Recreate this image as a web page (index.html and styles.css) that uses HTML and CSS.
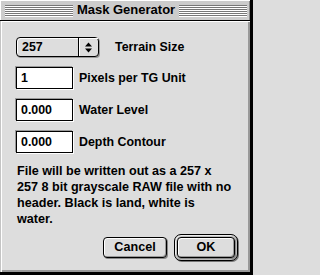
FILE: index.html
```html
<!DOCTYPE html>
<html>
<head>
<meta charset="utf-8">
<link rel="stylesheet" href="styles.css">
</head>
<body>
<div class="window">
  <div class="titlebar">
    <div class="stripes"></div>
    <div class="title">Mask Generator</div>
    <div class="stripes"></div>
  </div>
  <div class="content">
    <div class="row">
      <div class="popup">
        <div class="popup-value">257</div>
        <div class="popup-arrow">
          <svg width="7" height="11" viewBox="0 0 7 11"><polygon points="0,4.5 7,4.5 3.5,0.5" fill="#000"/><polygon points="0,6.5 7,6.5 3.5,10.5" fill="#000"/></svg>
        </div>
      </div>
      <div class="label label-popup">Terrain Size</div>
    </div>
    <div class="row">
      <div class="field">1</div>
      <div class="label">Pixels per TG Unit</div>
    </div>
    <div class="row">
      <div class="field">0.000</div>
      <div class="label">Water Level</div>
    </div>
    <div class="row">
      <div class="field">0.000</div>
      <div class="label">Depth Contour</div>
    </div>
    <p class="note">File will be written out as a 257 x<br>257 8 bit grayscale RAW file with no<br>header. Black is land, white is<br>water.</p>
    <div class="buttons">
      <div class="button">Cancel</div>
      <div class="ring"><div class="button button-default">OK</div></div>
    </div>
  </div>
</div>
</body>
</html>
```
FILE: styles.css
```css
html, body {
  margin: 0;
  padding: 0;
  background: #dddddd;
}
.window {
  width: 253px;
  height: 275px;
  box-sizing: border-box;
  border-right: 3px solid #000;
  border-bottom: 3px solid #000;
  display: flex;
  flex-direction: column;
  background: #dddddd;
  font-family: "Liberation Sans", Arial, sans-serif;
  font-weight: bold;
  color: #000;
}
.titlebar {
  height: 20px;
  flex: none;
  background: #cccccc;
  border-bottom: 1px solid #000;
  box-shadow: inset 1px 1px 0 #ffffff, inset -1px 0 0 #888888;
  display: flex;
  align-items: center;
  padding: 0 3px 0 5px;
}
.stripes {
  flex: 1;
  height: 12px;
  margin-top: 1px;
  background: repeating-linear-gradient(to bottom, #777777 0, #777777 1px, #ffffff 1px, #ffffff 2px);
}
.title {
  font-size: 13px;
  padding: 0 4px 0 4px;
  line-height: 20px;
}
.content {
  flex: 1;
  border-left: 1px solid #c4c4c4;
  box-shadow: inset 1px 1px 0 #ffffff, inset -2px -2px 0 #999999;
  padding: 16px 12px 0 15px;
  display: flex;
  flex-direction: column;
  gap: 10px;
  font-size: 12.4px;
}
.row {
  display: flex;
  align-items: center;
}
.popup {
  width: 83px;
  height: 20px;
  box-sizing: border-box;
  border: 1px solid #000;
  border-radius: 4px;
  background: #dddddd;
  box-shadow: inset 1px 1px 0 #ffffff, 1px 1px 0 #999999;
  display: flex;
}
.popup-value {
  flex: 1;
  padding-left: 5px;
  line-height: 18px;
}
.popup-arrow {
  width: 19px;
  border-left: 1px solid #000;
  box-shadow: inset 1px 1px 0 #ffffff;
  display: flex;
  align-items: center;
  justify-content: center;
}
.label {
  margin-left: 6px;
}
.label-popup {
  margin-left: 16px;
}
.field {
  width: 57px;
  height: 22px;
  box-sizing: border-box;
  border: 1px solid #000;
  background: #ffffff;
  box-shadow: -1px -1px 0 #999999, 1px 1px 0 #ffffff;
  padding-left: 4px;
  line-height: 20px;
}
.note {
  margin: 0 0 0 1px;
  line-height: 16px;
  font-size: 12.6px;
  white-space: nowrap;
}
.buttons {
  display: flex;
  justify-content: flex-end;
  align-items: center;
  gap: 7px;
  margin-top: -3px;
}
.button {
  width: 64px;
  height: 21px;
  box-sizing: border-box;
  border: 1px solid #000;
  border-radius: 4px;
  background: #dddddd;
  box-shadow: inset 1px 1px 0 #ffffff, inset -1px -1px 0 #999999, 1px 1px 0 #888888;
  text-align: center;
  line-height: 19px;
  font-size: 12.6px;
}
.ring {
  border: 1px solid #000;
  border-radius: 7px;
  background: #bbbbbb;
  padding: 2px;
  box-shadow: inset 1px 1px 0 #eeeeee, 1px 1px 0 #777777;
}
.button-default {
  width: 58px;
}
```
